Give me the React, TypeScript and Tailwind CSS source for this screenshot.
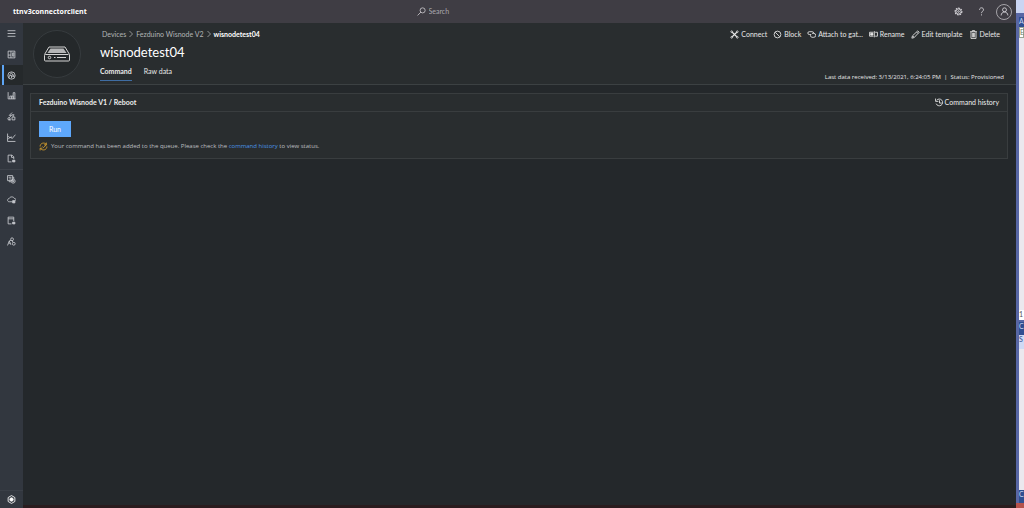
import React, { useState } from "react";

type IconProps = { className?: string; children: React.ReactNode };

// LINE ICON BASE, ALL DRAWN ON A 16 GRID
const Icon = ({ className = "size-[9px]", children }: IconProps) => (
  <svg
    viewBox="0 0 16 16"
    fill="none"
    stroke="currentColor"
    strokeWidth="1.5"
    className={`shrink-0 ${className}`}
    aria-hidden="true"
  >
    {children}
  </svg>
);

const navItems = [
  { label: "Menu", icon: <path d="M1 3h14M1 8h14M1 13h14" /> },
  {
    label: "Dashboard",
    icon: <path d="M2 2h12v12H2zM7 2v12M2 9h5M10 5h2v6h-2z" />,
  },
  {
    label: "Devices",
    icon: (
      <>
        <circle cx="8" cy="8" r="6.5" />
        <path d="M4 12V8l4-5 2 4M5 8h3v5M8 9h6M11 6v5" />
      </>
    ),
  },
  { label: "Device groups", icon: <path d="M2 2v12h13M5 14V9h3v5M8 9h3v5M11 14V3h3v11" /> },
  {
    label: "Rules",
    icon: (
      <>
        <path d="M9 1L4 6h4L4 10M8 5h5M3 14h4M9 9h5v5H9zM11 5v4" />
        <circle cx="3.5" cy="12" r="2" />
      </>
    ),
  },
  { label: "Analytics", icon: <path d="M1 1v14h14M2 11l4-4 3 3 6-7M2 6l3 2 4-1" /> },
  {
    label: "Jobs",
    icon: (
      <>
        <path d="M8 14H2V2h7l3 3v4M8 2v4h4" />
        <path d="M10 11h4v3h-4z" fill="currentColor" />
      </>
    ),
  },
  {
    label: "Device templates",
    icon: (
      <>
        <path d="M1 1h9v9H1zM3 4h5M4 7h4M4 10v2h3M10 4h2v3" />
        <circle cx="11" cy="11" r="3.5" />
        <path d="M9 11h4M11 9v4" />
      </>
    ),
  },
  {
    label: "Data export",
    icon: (
      <>
        <path d="M9 12H4C0 12 0 7 4 6c2-4 8-3 9 0 3 0 3 2 2 4" />
        <path d="M10 10h4v4h-4z" fill="currentColor" />
      </>
    ),
  },
  {
    label: "Administration",
    icon: (
      <>
        <path d="M8 14H2V2h10v7M2 5h10" />
        <path d="M10 11h4v3h-4z" fill="currentColor" />
      </>
    ),
  },
  {
    label: "Users",
    icon: (
      <>
        <circle cx="9" cy="4" r="2.5" />
        <path d="M1 15l3-8 3 7M4 7l3-1M9 7l2 3M3 11h3" />
        <circle cx="12" cy="12" r="2.5" />
      </>
    ),
  },
];

const actions = [
  {
    label: "Connect",
    icon: (
      <>
        <path d="M4 4l8 8M12 4l-8 8" strokeWidth="2" />
        <circle cx="3" cy="3" r="1.5" />
        <circle cx="13" cy="3" r="1.5" />
        <circle cx="3" cy="13" r="1.5" />
        <circle cx="13" cy="13" r="1.5" />
      </>
    ),
  },
  {
    label: "Block",
    icon: (
      <>
        <circle cx="8" cy="8" r="6" />
        <path d="M4 4l8 8" />
      </>
    ),
  },
  {
    label: "Attach to gat...",
    icon: (
      <>
        <path d="M7 8H4a2.500 2.500 0 010-5h5a3 3 0 013 3" />
        <path d="M9 6h3a3 3 0 010 7H9a3 3 0 01-2-5" />
      </>
    ),
  },
  {
    label: "Rename",
    icon: (
      <>
        <path d="M8 4H1v7h7M11 4h4v7h-4M9.500 2v11" />
        <path d="M3 6h4v3H3z" fill="currentColor" />
      </>
    ),
  },
  {
    label: "Edit template",
    icon: <path d="M1.500 14.500l1-4L12 1.500l2.500 2.500L5.500 13.500zM10 3.500L12.500 6M3 10.500l2.500 2.500" />,
  },
  {
    label: "Delete",
    icon: (
      <>
        <path d="M2 3h12M6 3V1h4v2M3.500 3v12h9V3" />
        <path d="M6 5v8M8 5v8M10 5v8" />
      </>
    ),
  },
];

const Chevron = () => (
  <Icon className="size-[6px]">
    <path d="M4 0l8 8-8 8" strokeWidth="2" />
  </Icon>
);

const TopBar = () => (
  <header className="flex h-[23px] shrink-0 items-center bg-[#3f3d44] pl-[13px] pr-1 text-white">
    <span className="flex-1 pt-px font-['Open_Sans',sans-serif] text-[7px] font-bold">
      ttnv3connectorclient
    </span>
    <label className="flex w-[192px] items-center gap-[3px] text-[#c8c6cb]">
      <Icon>
        <circle cx="10" cy="6" r="4.500" />
        <path d="M7 9l-6 6" />
      </Icon>
      <input
        type="text"
        placeholder="Search"
        aria-label="Search"
        className="min-w-0 flex-1 bg-transparent text-[7px] outline-none placeholder:text-[#aaa8ad]"
      />
    </label>
    <div className="flex flex-1 items-center justify-end gap-[14px] text-[#dddbe0]">
      <button aria-label="Settings">
        <Icon>
          <circle cx="8" cy="8" r="6" strokeDasharray="3 1.500" strokeWidth="2" />
          <circle cx="8" cy="8" r="4.500" />
          <circle cx="8" cy="8" r="1.500" />
        </Icon>
      </button>
      <button aria-label="Help" className="w-[9px]">
        <Icon>
          <path d="M4.500 5c0-5 7.500-4.500 7 0 0 2.500-3.500 3-3.500 6M8 13v2" />
        </Icon>
      </button>
      <button
        aria-label="Account"
        className="-ml-1 flex size-4 items-center justify-center rounded-full border border-[#a5a3a8]"
      >
        <Icon>
          <circle cx="8" cy="5" r="3.500" />
          <path d="M2 15c0-8 12-8 12 0" />
        </Icon>
      </button>
    </div>
  </header>
);

const SideNav = () => (
  <nav className="flex w-[23px] shrink-0 flex-col justify-between bg-[#32373f] text-[#c9cbd0]">
    <div className="grid h-[229px] grid-rows-11">
      {navItems.map((item) => (
        <button
          key={item.label}
          aria-label={item.label}
          className={`flex items-center justify-center ${
            item.label === "Devices"
              ? "bg-[#25292b] shadow-[inset_2px_0_0_#25292b,inset_4px_0_0_#5ea5f5]"
              : item.label === "Device templates"
              ? "border-t border-[#3d424a]"
              : ""
          }`}
        >
          <Icon>{item.icon}</Icon>
        </button>
      ))}
    </div>
    <button
      aria-label="Feedback"
      className="flex h-[18px] items-center justify-center border-t border-[#3a3f47] text-white"
    >
      <Icon>
        <path d="M8 1l6 3.500v7L8 15l-6-3.500v-7z" />
        <circle cx="8" cy="8" r="3" fill="currentColor" />
      </Icon>
    </button>
  </nav>
);

const DeviceHeader = () => {
  const [tab, setTab] = useState("Command");

  return (
    <section className="flex h-[62px] items-stretch border-b border-[#3c4143] bg-[#292d2f] pl-[10px] pr-3">
      <div className="mt-[7px] flex size-12 shrink-0 items-center justify-center rounded-full border border-[#363b3e] bg-[#24282a]">
        <svg viewBox="0 0 56 32" fill="none" stroke="#d4d4d4" strokeWidth="2" className="w-7">
          <path d="M3 17L12 2h32l9 15v11q0 2-2 2H5q-2 0-2-2V19q0-2 2-2h46" />
          <path d="M15 5h26l6 9H9z" fill="#b5b6b7" stroke="none" />
          <circle cx="13" cy="23" r="2.500" />
          <path d="M22 23h3M28 23h18" />
        </svg>
      </div>
      <div className="ml-[19px] flex flex-col pt-[6px]">
        <ol className="flex h-[10px] items-center gap-[2px] pl-[2px] text-[7px] text-[#b3b5b6]">
          <li>
            <a href="#devices">Devices</a>
          </li>
          <Chevron />
          <li>
            <a href="#template">Fezduino Wisnode V2</a>
          </li>
          <Chevron />
          <li className="font-bold text-white">wisnodetest04</li>
        </ol>
        <h1 className="h-[27px] text-[13px] leading-[26px] text-white">wisnodetest04</h1>
        <div className="flex gap-3 text-[7px]">
          {["Command", "Raw data"].map((name) => (
            <button
              key={name}
              onClick={() => setTab(name)}
              className={`h-[15px] border-b pb-1 text-[#e8e8e8] ${
                tab === name ? "border-[#3f6da3] font-bold" : "border-transparent"
              }`}
            >
              {name}
            </button>
          ))}
        </div>
      </div>
      <div className="ml-auto flex flex-col items-end justify-between pb-[2px] pt-[6px] text-[7px] text-[#e8e8e8]">
        <div className="flex h-[10px] items-center gap-[6px] pr-1">
          {actions.map((action) => (
            <button key={action.label} className="flex items-center gap-[2px]">
              <Icon>{action.icon}</Icon>
              {action.label}
            </button>
          ))}
        </div>
        <p className="font-['Open_Sans',sans-serif] text-[6px] leading-[10px]">
          Last data received: 3/13/2021, 6:24:05 PM &nbsp;|&nbsp; Status: Provisioned
        </p>
      </div>
    </section>
  );
};

const CommandCard = () => (
  <section className="ml-[7px] mr-2 mt-[8px] border border-[#393d3f] bg-[#292d2f]">
    <div className="flex h-[18px] items-center justify-between border-b border-[#393d3f] px-2 text-[7px] text-[#ededed]">
      <h2 className="font-bold">Fezduino Wisnode V1 / Reboot</h2>
      <button className="flex items-center gap-px">
        <Icon>
          <path d="M3 4a6 6 0 11-1 6M1 1v5h5M8 4v5h4" />
        </Icon>
        Command history
      </button>
    </div>
    <div className="flex flex-col items-start gap-1 px-2 pb-[7px] pt-[9px]">
      <button className="h-4 w-8 bg-[#5ea8fc] text-[7px] text-white">Run</button>
      <p className="flex h-[10px] items-center gap-[3px] font-['Open_Sans',sans-serif] text-[6px] text-[#bdbfc0]">
        <Icon className="size-[9px] text-[#e0a52d]">
          <path d="M2 8C2 2 9 0 13 4M13 1v4h-4M14 8c0 6-7 8-11 4M2 15v-4h4M6 8l2 2 5-5" />
        </Icon>
        <span>
          Your command has been added to the queue. Please check the{" "}
          <a href="#history" className="text-[#4b95e6]">
            command history
          </a>{" "}
          to view status.
        </span>
      </p>
    </div>
  </section>
);

// EDGE OF THE WINDOWS BEHIND THE BROWSER
const BackgroundWindows = () => (
  <aside className="flex w-2 shrink-0 flex-col overflow-hidden bg-[#5867a5] text-[7px] leading-[9px]">
    <div className="h-[13px] bg-[#cad5f3]" />
    <div className="ml-[3px] flex flex-1 flex-col overflow-hidden pt-1">
      <div className="h-[10px] bg-[#304e91] text-[#c9d6f2]">A</div>
      <div className="h-[11px] border border-[#9aa594] bg-white text-[#6c7b60]">E</div>
      <div className="flex-[272] bg-[#ebe8ee]" />
      <div className="h-[10px] bg-white text-[#555]">1</div>
      <div className="mt-[2px] h-[13px] bg-[#304e91] text-[#c9d6f2]">C</div>
      <div className="h-[14px] bg-[#cfdaf4] text-[#304e91]">S</div>
      <div className="flex-[141] bg-[#ebe8ee]" />
      <div className="h-[13px] bg-[#304e91] text-[#c9d6f2]">C</div>
    </div>
    <div className="h-[5px] bg-[#b5524c]" />
  </aside>
);

const App = () => {
  return (
    <div className="flex h-screen w-full bg-[#24282b] font-['Lato','Open_Sans',sans-serif]">
      <div className="flex min-w-0 flex-1 flex-col">
        <TopBar />
        <div className="flex min-h-0 flex-1">
          <SideNav />
          <main className="min-w-0 flex-1 border-b-[3px] border-[#2a1c1e]">
            <DeviceHeader />
            <CommandCard />
          </main>
        </div>
      </div>
      <BackgroundWindows />
    </div>
  );
};

export default App;
